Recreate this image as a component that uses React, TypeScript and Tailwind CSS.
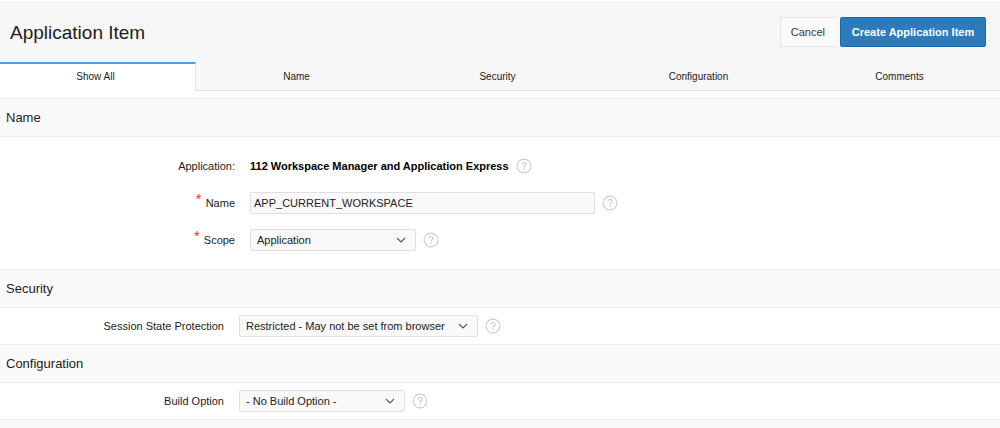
import { useState } from "react";
import type { ReactNode } from "react";

const tabs = ["Show All", "Name", "Security", "Configuration", "Comments"];

const HelpButton = ({ topic }: { topic: string }) => (
	<button
		type="button"
		aria-label={`Help: ${topic}`}
		className="shrink-0 cursor-pointer text-[#cccccc]"
	>
		<svg width="16" height="16" viewBox="0 0 16 16" fill="none" stroke="currentColor">
			<circle cx="8" cy="8" r="6.9" strokeWidth="1.1" />
			<path d="M6 6.4C6 5.1 6.8 4.5 8 4.5s2 .7 2 1.8c0 1.4-2 1.5-2 3.1" strokeWidth="1.2" />
			<path d="M8 10.6v1.4" strokeWidth="1.4" />
		</svg>
	</button>
);

interface SelectFieldProps {
	id: string;
	options: string[];
	className: string;
}

const SelectField = ({ id, options, className }: SelectFieldProps) => (
	<div className={`relative ${className}`}>
		<select
			id={id}
			className="block h-[22px] w-full appearance-none rounded-xs border border-[#dfdfdf] bg-[#f9f9f9] pr-6 pl-1.5 text-[#222222]"
		>
			{options.map((option) => (
				<option key={option}>{option}</option>
			))}
		</select>
		<svg
			className="pointer-events-none absolute top-2 right-2.5"
			width="10"
			height="6"
			viewBox="0 0 10 6"
			fill="none"
			stroke="#555555"
			strokeWidth="1.1"
		>
			<path d="M1 1l4 4 4-4" />
		</svg>
	</div>
);

interface FieldRowProps {
	label: string;
	htmlFor?: string;
	required?: boolean;
	labelClass: string;
	children: ReactNode;
}

const FieldRow = ({
	label,
	htmlFor,
	required = false,
	labelClass,
	children,
}: FieldRowProps) => (
	<div className="flex h-9 items-center">
		<div className={`flex shrink-0 items-center justify-end gap-1 ${labelClass}`}>
			{required && (
				<span className="h-6 text-[15px] text-red-500 leading-4" aria-hidden="true">
					*
				</span>
			)}
			{htmlFor ? <label htmlFor={htmlFor}>{label}</label> : <span>{label}</span>}
		</div>
		<div className="flex min-w-0 flex-1 items-center gap-[7px] pl-[15px]">
			{children}
			<HelpButton topic={label} />
		</div>
	</div>
);

const SectionHeader = ({ title }: { title: string }) => (
	<h2 className="flex h-[38px] items-center border-[#ececec] border-b bg-[#fafafa] px-1.5 text-[13px]">
		{title}
	</h2>
);

const App = () => {
	const [activeTab, setActiveTab] = useState("Show All");
	const [name, setName] = useState("APP_CURRENT_WORKSPACE");

	return (
		<div className="bg-white pt-0.5 font-['Liberation_Sans',Arial,sans-serif] text-[#1c1c1c] text-[11px]">
			<header className="flex h-[60px] items-center justify-between border-[#f0f0f0] border-t bg-[#f7f7f7] pr-3.5 pl-2.5">
				<h1 className="pt-0.5 text-[19px]">Application Item</h1>
				<div className="flex pb-px">
					<button
						type="button"
						className="h-[30px] cursor-pointer border border-[#e3e3e3] border-r-0 bg-[#fafafa] px-2.5 text-[#383838]"
					>
						Cancel
					</button>
					<button
						type="button"
						className="ml-[5px] h-[30px] w-[146px] cursor-pointer rounded-xs border border-[#1469b0] bg-[#2d7bbb] font-bold text-white"
					>
						Create Application Item
					</button>
				</div>
			</header>

			<nav className="grid h-[29px] grid-cols-[196fr_repeat(4,201fr)] bg-[#f7f7f7] text-[10px]">
				{tabs.map((tab) => (
					<button
						key={tab}
						type="button"
						onClick={() => setActiveTab(tab)}
						className={`cursor-pointer ${
							activeTab === tab
								? "border-t-2 border-t-[#4a9fe3] border-r border-r-[#e6e6e6] bg-white pr-1 pb-0.5"
								: "border-[#e3e3e3] border-b pt-px"
						}`}
					>
						{tab}
					</button>
				))}
			</nav>

			<main className="pt-[7px]">
				<section className="border-[#ececec] border-t">
					<SectionHeader title="Name" />
					<div className="flex flex-col gap-px py-[11px]">
						<FieldRow label="Application:" labelClass="w-[235px]">
							<strong className="text-black">
								112 Workspace Manager and Application Express
							</strong>
						</FieldRow>
						<FieldRow label="Name" htmlFor="name" required labelClass="w-[235px]">
							<input
								id="name"
								type="text"
								value={name}
								onChange={(e) => setName(e.target.value)}
								className="h-[22px] w-[345px] rounded-xs border border-[#dfdfdf] bg-[#f9f9f9] px-[3px] text-[#222222]"
							/>
						</FieldRow>
						<FieldRow label="Scope" htmlFor="scope" required labelClass="w-[235px]">
							<SelectField
								id="scope"
								className="w-[166px]"
								options={["Application", "Global"]}
							/>
						</FieldRow>
					</div>
				</section>

				<section className="border-[#ececec] border-t">
					<SectionHeader title="Security" />
					<FieldRow
						label="Session State Protection"
						htmlFor="protection"
						labelClass="w-[224px]"
					>
						<SelectField
							id="protection"
							className="w-[239px]"
							options={["Restricted - May not be set from browser", "Unrestricted"]}
						/>
					</FieldRow>
				</section>

				<section className="border-[#ececec] border-t border-b">
					<SectionHeader title="Configuration" />
					<FieldRow label="Build Option" htmlFor="build" labelClass="w-[224px]">
						<SelectField
							id="build"
							className="w-[166px]"
							options={["- No Build Option -"]}
						/>
					</FieldRow>
				</section>
				<div className="h-2 bg-[#fafafa]" />
			</main>
		</div>
	);
};

export default App;
